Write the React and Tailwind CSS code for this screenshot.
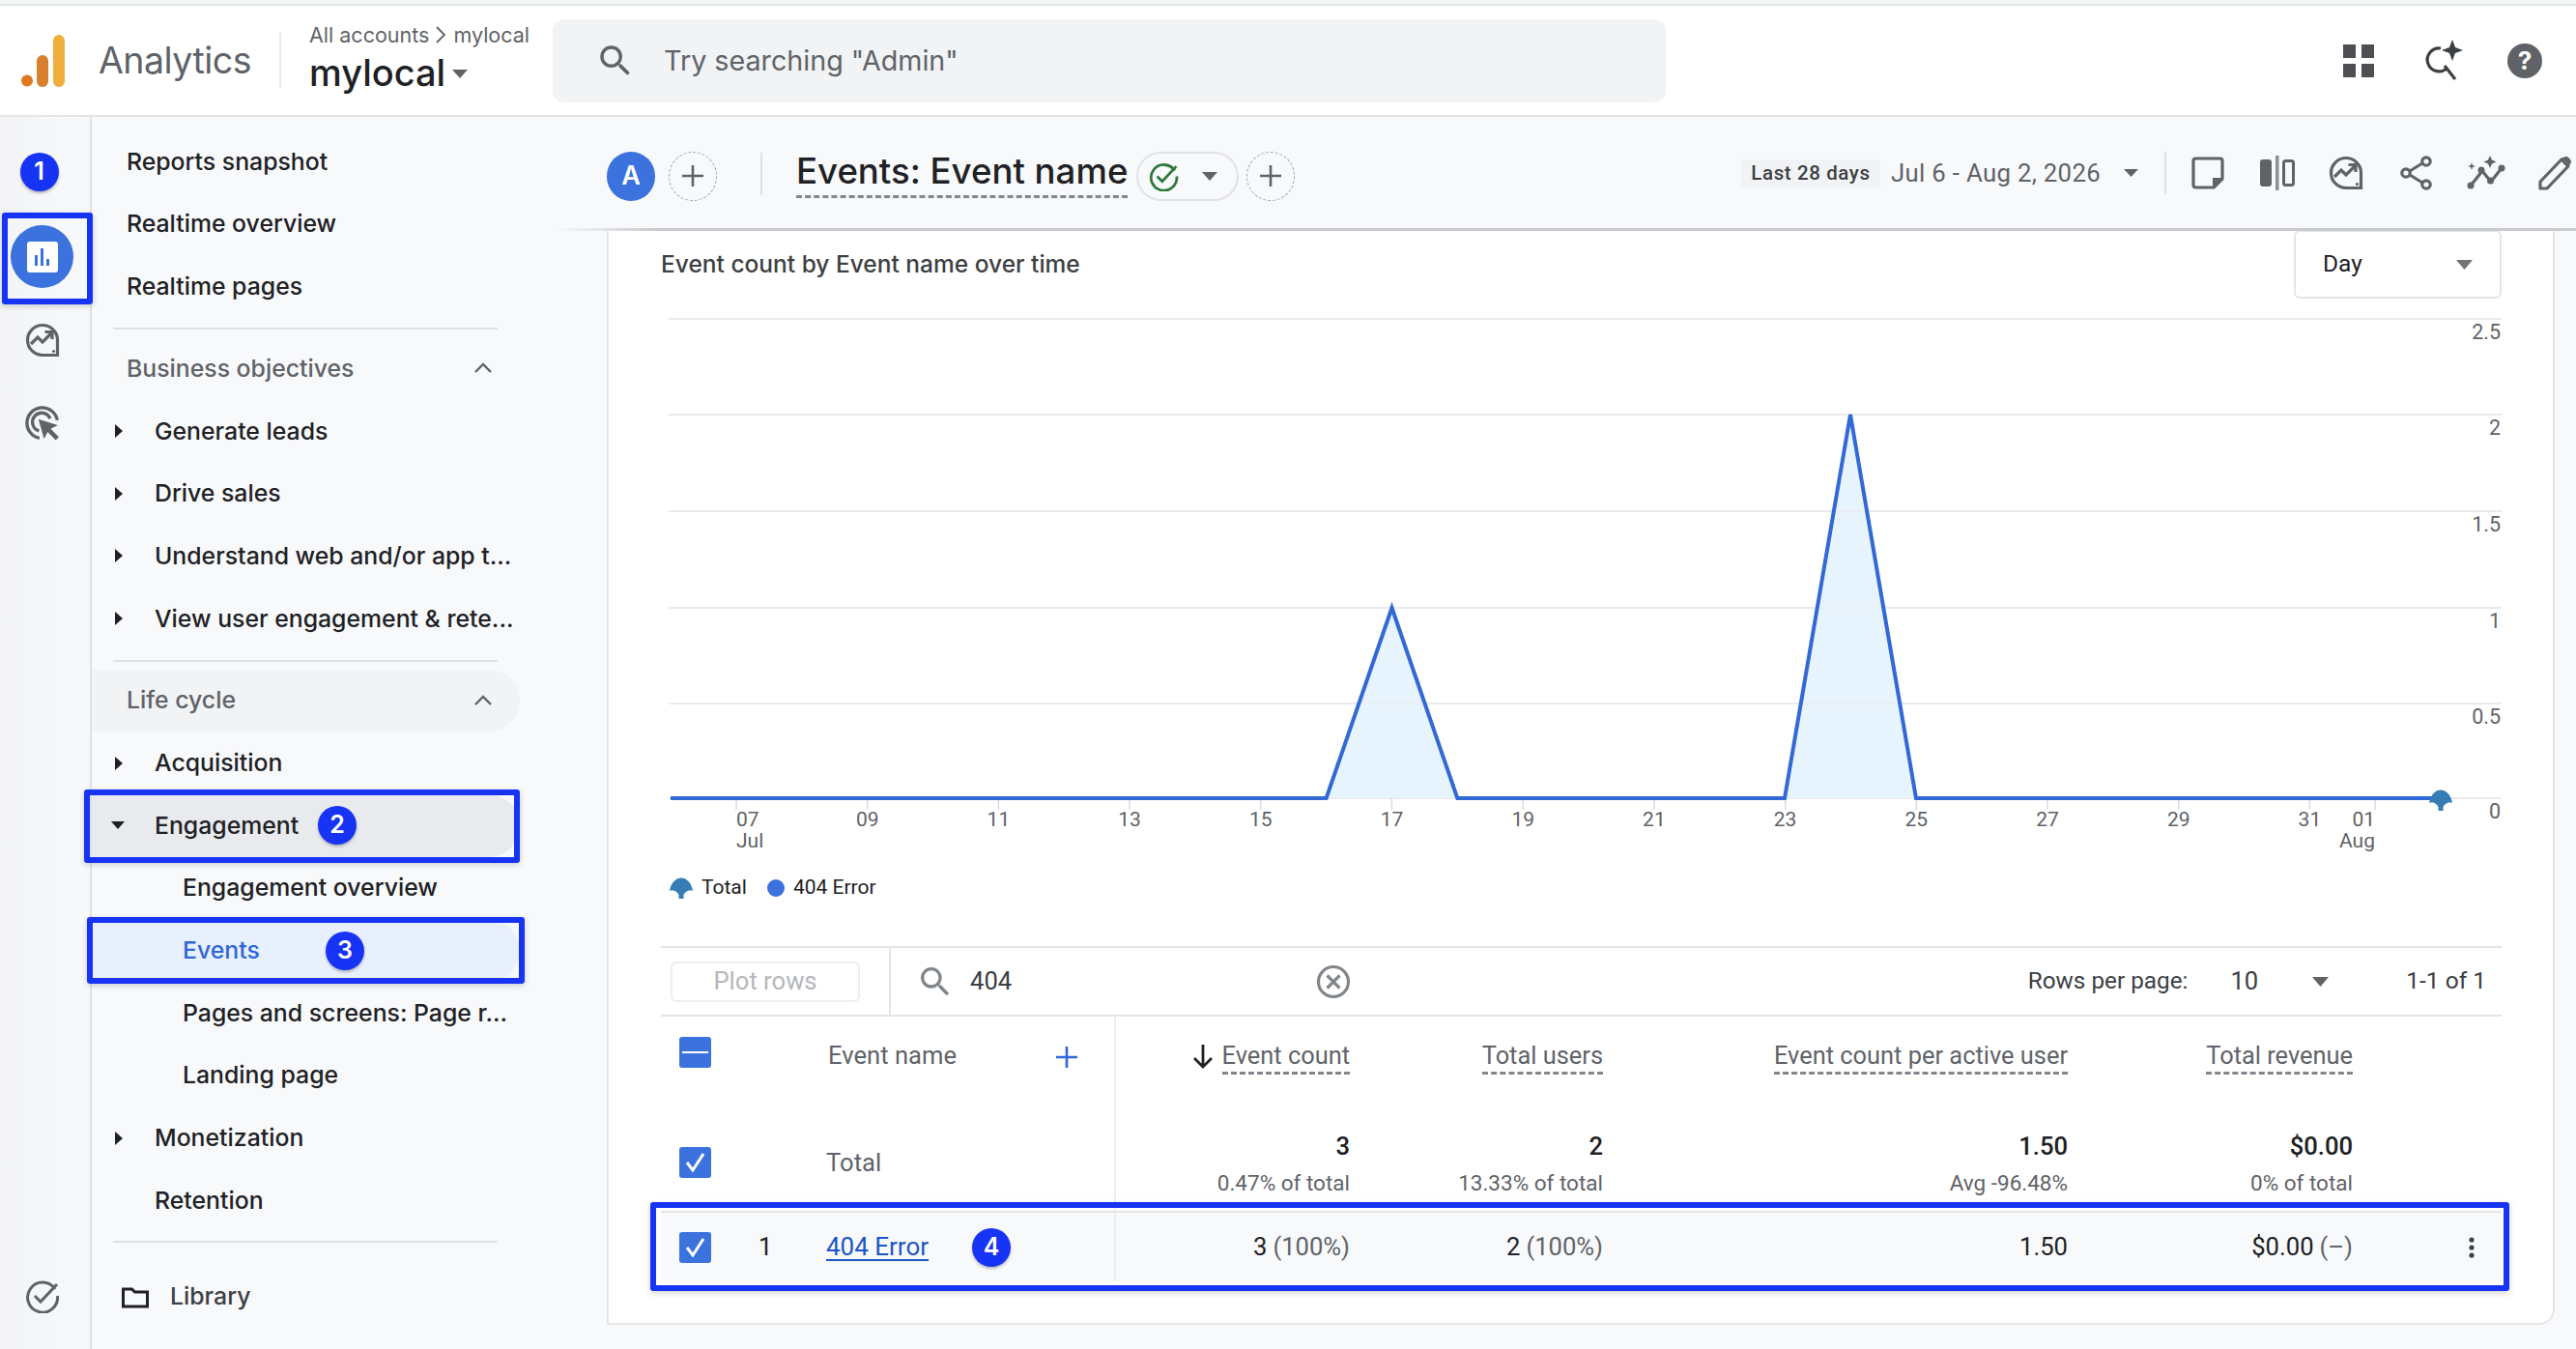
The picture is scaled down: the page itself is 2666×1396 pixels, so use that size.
import { Fragment } from 'react'

const BLUE = 'border-[6px] border-[#1733f5] rounded-[3px] shadow-[0_2px_6px_rgba(0,0,0,0.18)]'
const SANS = 'font-["Inter","Noto_Sans",sans-serif]'
const ROBOTO = 'font-["Roboto",sans-serif]'

function Badge({ n, className = '' }) {
  return (
    <span className={`flex w-10 h-10 items-center justify-center rounded-full bg-[#1733f5] text-white text-[25px] font-semibold shadow-[0_2px_3px_rgba(0,0,0,0.25)] ${SANS} ${className}`}>{n}</span>
  )
}

function Logo() {
  return (
    <svg width="45" height="54" viewBox="0 0 45 54">
      <circle cx="6" cy="47.5" r="6" fill="#dd7a1f" />
      <rect x="16" y="21" width="12" height="33" rx="6" fill="#d9802e" />
      <rect x="33" y="0" width="12" height="54" rx="6" fill="#f0ae3c" />
    </svg>
  )
}

function SearchIcon({ size = 36, color = '#5f6368' }) {
  return (
    <svg width={size} height={size} viewBox="0 0 24 24" fill={color}>
      <path d="M15.5 14h-.79l-.28-.27A6.471 6.471 0 0 0 16 9.5 6.5 6.5 0 1 0 9.5 16c1.61 0 3.09-.59 4.23-1.57l.27.28v.79l5 4.99L20.49 19l-4.99-5zm-6 0C7.01 14 5 11.99 5 9.5S7.01 5 9.5 5 14 7.01 14 9.5 11.99 14 9.5 14z" />
    </svg>
  )
}

function InsightIcon({ size = 36 }) {
  return (
    <svg width={size} height={size} viewBox="0 0 36 36" fill="none" stroke="#5f6368" strokeWidth="3.2">
      <path d="M18 2.5a15.5 15.5 0 1 0 0 31h15.5V18A15.5 15.5 0 0 0 18 2.5z" />
      <path d="M6 22l7-7 5 5 9-9" strokeLinejoin="miter" />
      <path d="M20.5 9.5H28V17" />
      <circle cx="29.5" cy="29.5" r="1.6" fill="#5f6368" stroke="none" />
    </svg>
  )
}

function TargetIcon() {
  return (
    <svg width="38" height="38" viewBox="0 0 36 36" fill="none" stroke="#5f6368" strokeWidth="3.2">
      <path d="M15 32.5A15 15 0 1 1 32.5 15" />
      <path d="M14.5 25.5A9 9 0 1 1 25.5 13.5" />
      <path d="M14 14l19 6-7 3.5 8 8-3 3-8-8-3.5 7z" fill="#5f6368" stroke="none" />
    </svg>
  )
}

function CheckCircle({ size = 36, color = '#5f6368', sw = 3 }) {
  return (
    <svg width={size} height={size} viewBox="0 0 36 36" fill="none" stroke={color} strokeWidth={sw}>
      <path d="M31 11A15.5 15.5 0 1 0 33.5 18" />
      <path d="M10 18l6 6L33 6" />
    </svg>
  )
}

function Triangle({ w = 16, h = 9, color = '#5f6368', className = '' }) {
  return (
    <svg width={w} height={h} viewBox="0 0 16 9" preserveAspectRatio="none" className={className}><path d="M0 0h16L8 9z" fill={color} /></svg>
  )
}

function Chevron() {
  return (
    <svg width="20" height="12" viewBox="0 0 20 12" fill="none" stroke="#5f6368" strokeWidth="2.4"><path d="M2 10l8-8 8 8" /></svg>
  )
}

function DashedPlus() {
  return (
    <span className="flex w-[50px] h-[51px] shrink-0 items-center justify-center rounded-full border border-dashed border-[#9aa0a6]">
      <svg width="26" height="26" viewBox="0 0 26 26" stroke="#5f6368" strokeWidth="2.6"><path d="M13 2v22M2 13h22" /></svg>
    </span>
  )
}

function NoteIcon() {
  return (
    <svg width="34" height="34" viewBox="0 0 34 34" fill="none" stroke="#5f6368" strokeWidth="3.2">
      <path d="M2 4.5A2.5 2.5 0 0 1 4.5 2h25A2.5 2.5 0 0 1 32 4.5V23l-9 9H4.500A2.5 2.500 0 0 1 2 29.500z" strokeLinejoin="round" />
      <path d="M32 22H22v10z" fill="#5f6368" stroke="none" />
    </svg>
  )
}

function CompareIcon() {
  return (
    <svg width="36" height="36" viewBox="0 0 36 36">
      <rect x="0" y="4" width="12" height="28" rx="3" fill="#5f6368" />
      <rect x="16" y="0" width="3.500" height="36" fill="#8d9096" />
      <rect x="24.500" y="5.500" width="10" height="25" rx="2" fill="none" stroke="#5f6368" strokeWidth="3" />
    </svg>
  )
}

function ShareIcon() {
  return (
    <svg width="34" height="36" viewBox="0 0 34 36" fill="none" stroke="#5f6368" strokeWidth="3.2">
      <circle cx="27" cy="6" r="4.200" />
      <circle cx="6" cy="18" r="4.200" />
      <circle cx="27" cy="30" r="4.200" />
      <path d="M10 16L23 8M10 20l13 8" />
    </svg>
  )
}

function SparkLineIcon() {
  return (
    <svg width="40" height="36" viewBox="0 0 40 36">
      <path d="M4 31l12-15 9 11L36 13" fill="none" stroke="#5f6368" strokeWidth="3.200" />
      <circle cx="4" cy="31" r="3.500" fill="#5f6368" />
      <circle cx="15" cy="15" r="3.500" fill="#5f6368" />
      <circle cx="24.500" cy="26" r="3.500" fill="#5f6368" />
      <circle cx="36" cy="13" r="3.500" fill="#5f6368" />
      <path d="M24 0l2 4.500 4.500 2-4.500 2-2 4.500-2-4.500-4.500-2 4.500-2z" fill="#5f6368" />
      <path d="M5 7l1 3 3 1-3 1-1 3-1-3-3-1 3-1z" fill="#5f6368" />
    </svg>
  )
}

function PencilIcon() {
  return (
    <svg width="34" height="36" viewBox="0 0 34 36" fill="none" stroke="#5f6368" strokeWidth="3.200">
      <path d="M2 34v-7L24 4l7 7L9 34z" strokeLinejoin="round" />
      <path d="M24 2l8 8 1-1a4 4 0 0 0-1-6 4 4 0 0 0-6-1z" fill="#5f6368" stroke="none" />
    </svg>
  )
}

function Rail() {
  return (
    <div className="w-[95px] shrink-0 border-r-2 border-[#dfe1e5] flex flex-col items-center pr-[6px] pt-[37px] pb-[37px] bg-gradient-to-r from-[#f3f4f6] to-[#f8f9fb]">
      <Badge n="1" className="mr-[6px]" />
      <div className="relative mt-[35px] w-[65px] h-[65px] rounded-full bg-[#3b72de] flex items-center justify-center">
        <span className="flex w-8 h-8 items-end justify-center gap-[3px] rounded-[3px] bg-white pb-[7px]">
          <span className="w-[3px] h-[11px] bg-[#3b72de]" />
          <span className="w-[3px] h-[18px] bg-[#3b72de]" />
          <span className="w-[3px] h-[7px] bg-[#3b72de]" />
        </span>
        <span className={`absolute -left-[9px] -right-[20px] -top-[13px] -bottom-[17px] ${BLUE}`} />
      </div>
      <div className="mt-[36px]"><InsightIcon /></div>
      <div className="mt-[49px]"><TargetIcon /></div>
      <div className="mt-auto"><CheckCircle /></div>
    </div>
  )
}

function Row({ label, indent = 36, arrow, tone = 'text-[#202124]', className = '', children }) {
  return (
    <div className={`relative flex h-[64.7px] w-[443px] items-center rounded-r-full text-[24.8px] font-medium ${tone} ${className}`} style={{ paddingLeft: indent }}>
      {arrow === 'right' && (
        <svg width="8" height="14" viewBox="0 0 8 14" className="absolute left-[24px]"><path d="M0 0l8 7-8 7z" fill="#202124" /></svg>
      )}
      {arrow === 'down' && (
        <svg width="14" height="8" viewBox="0 0 14 8" className="absolute left-[20px]"><path d="M0 0h14L7 8z" fill="#202124" /></svg>
      )}
      <span className="whitespace-nowrap">{label}</span>
      {children}
    </div>
  )
}

function Divider({ top, bottom }) {
  return <div className={`ml-[22px] w-[398px] h-[2px] bg-[#dfe1e5] ${top} ${bottom}`} />
}

function Sidebar() {
  return (
    <nav className={`w-[479px] shrink-0 pt-[14px] ${SANS}`}>
      <Row label="Reports snapshot" />
      <Row label="Realtime overview" />
      <Row label="Realtime pages" />
      <Divider top="mt-[10px]" bottom="mb-[8px]" />
      <Row label="Business objectives" tone="text-[#5f6368]">
        <span className="absolute right-[28px]"><Chevron /></span>
      </Row>
      <Row label="Generate leads" indent={65} arrow="right" />
      <Row label="Drive sales" indent={65} arrow="right" />
      <Row label="Understand web and/or app t..." indent={65} arrow="right" />
      <Row label="View user engagement & rete..." indent={65} arrow="right" />
      <Divider top="mt-[10px]" bottom="mb-[8px]" />
      <Row label="Life cycle" tone="text-[#5f6368]" className="bg-[#f1f3f4]">
        <span className="absolute right-[28px]"><Chevron /></span>
      </Row>
      <Row label="Acquisition" indent={65} arrow="right" />
      <Row label="Engagement" indent={65} arrow="down" className="bg-[#e8eaed]">
        <Badge n="2" className="absolute left-[234px]" />
        <span className={`absolute -left-2 right-0 -top-[5px] -bottom-[6px] ${BLUE}`} />
      </Row>
      <Row label="Engagement overview" indent={94} />
      <Row label="Events" indent={94} tone="text-[#2f67d8]" className="bg-[#e8f0fe]">
        <Badge n="3" className="absolute left-[242px]" />
        <span className={`absolute -left-[5px] -right-[5px] -top-[2px] -bottom-[2px] ${BLUE}`} />
      </Row>
      <Row label="Pages and screens: Page r..." indent={94} />
      <Row label="Landing page" indent={94} />
      <Row label="Monetization" indent={65} arrow="right" />
      <Row label="Retention" indent={65} />
      <Divider top="mt-[9px]" bottom="mb-[24px]" />
      <div className="flex h-[64px] items-center pl-[31px] text-[24.8px] font-medium text-[#3c4043]">
        <svg width="28" height="24" viewBox="0 0 28 24" fill="none" stroke="#202124" strokeWidth="3"><path d="M1.500 4h9l3 3h13v15h-25z" /></svg>
        <span className="ml-[22px]">Library</span>
      </div>
    </nav>
  )
}

function Toolbar() {
  return (
    <div className={`relative z-10 flex h-[116px] shrink-0 items-center bg-[#f8f9fb] pl-[54px] pr-[5px] ${SANS}`}>
      <span className="mt-[6px] flex w-[50px] h-[51px] shrink-0 items-center justify-center rounded-full bg-[#3b72de] text-[27px] font-semibold text-white">A</span>
      <span className="ml-[14px] mt-[6px]"><DashedPlus /></span>
      <span className="ml-[45px] mt-[2px] h-[44px] w-[2px] bg-[#dfe1e5]" />
      <span className="ml-[35px] border-b-[3px] border-dashed border-[#80868b] pb-[2px] text-[36.6px] leading-[46px] font-medium text-[#202124] whitespace-nowrap">Events: Event name</span>
      <span className="ml-[9px] mt-[6px] flex h-[51px] w-[106px] items-center gap-[24px] rounded-full border-2 border-[#e0e2e6] pl-[11px]">
        <CheckCircle size={31} color="#2f7738" sw={3.2} />
        <Triangle />
      </span>
      <span className="ml-[8px] mt-[6px]"><DashedPlus /></span>
      <div className={`ml-auto flex items-center ${ROBOTO}`}>
        <span className="flex h-[29px] w-[144px] items-center justify-center bg-[#f1f3f4] text-[20.5px] font-medium tracking-[0.6px] text-[#3c4043]">Last 28 days</span>
        <span className="ml-[11px] text-[25.8px] tracking-[0.3px] text-[#5f6368] whitespace-nowrap">Jul 6 - Aug 2, 2026</span>
        <Triangle w={15} h={8} className="ml-[24px]" />
        <span className="ml-[27px] h-[44px] w-[2px] bg-[#dfe1e5]" />
        <span className="ml-[26px]"><NoteIcon /></span>
        <span className="ml-[37px]"><CompareIcon /></span>
        <span className="ml-[35px]"><InsightIcon /></span>
        <span className="ml-[38px]"><ShareIcon /></span>
        <span className="ml-[35px]"><SparkLineIcon /></span>
        <span className="ml-[34px]"><PencilIcon /></span>
      </div>
      <span className="absolute inset-x-0 -bottom-[2px] h-[3px] bg-gradient-to-r from-[#f8f9fb] to-[#c9cbce] to-[5%]" />
    </div>
  )
}

// chart coordinates: page x - 684, page y - 309
const gridY = [20, 119, 219, 319, 418, 516]
const yLabels = ['2.5', '2', '1.5', '1', '0.5', '0']
const ticks = ['07', '09', '11', '13', '15', '17', '19', '21', '23', '25', '27', '29', '31']
const tickX = (i) => 78 + i * 135.7

function Ginkgo({ x, y, fill = '#367cb5' }) {
  return <path transform={`translate(${x} ${y})`} d="M-12 5C-9-13 9-13 12 5C8 3 4 6 2.500 9V13H-2.500V9C-4 6-8 3-12 5Z" fill={fill} />
}

function Chart() {
  const top = 516
  const line = `10,${top} 688.600,${top} 756.500,319 824.300,${top} 1163,${top} 1231,119 1299,${top} 1842,${top}`
  return (
    <svg width="1905" height="585" viewBox="0 0 1905 585" className="block">
      {gridY.map((y) => <line key={y} x1="8" x2="1905" y1={y} y2={y} stroke="#e8eaed" strokeWidth="2" />)}
      <polygon points={`688.600,${top} 756.500,319 824.300,${top}`} fill="#e8f4fd" />
      <polygon points={`1163,${top} 1231,119 1299,${top}`} fill="#e8f4fd" />
      {gridY.slice(1, 5).map((y) => <line key={y} x1="8" x2="1905" y1={y} y2={y} stroke="#e8eaed" strokeOpacity="0.6" strokeWidth="2" />)}
      {ticks.map((t, i) => <line key={t} x1={tickX(i)} x2={tickX(i)} y1={top} y2={top + 12} stroke="#dadce0" strokeWidth="1.500" />)}
      <line x1="1774" x2="1774" y1={top} y2={top + 12} stroke="#dadce0" strokeWidth="1.500" />
      <polyline points={line} fill="none" stroke="#3269d6" strokeWidth="4" strokeLinejoin="miter" />
      <Ginkgo x={1842} y={516} />
      <g className={ROBOTO} fontSize="21" fill="#5f6368">
        {yLabels.map((l, i) => <text key={l} x="1904" y={gridY[i] + 21} fontSize="21.5" textAnchor="end">{l}</text>)}
        {ticks.map((t, i) => <text key={t} x={i === 0 ? 78 : tickX(i)} y="545" textAnchor={i === 0 ? 'start' : 'middle'}>{t}</text>)}
        <text x="78" y="567">Jul</text>
        <text x="1774" y="545" textAnchor="end">01</text>
        <text x="1774" y="567" textAnchor="end">Aug</text>
      </g>
    </svg>
  )
}

function Legend() {
  return (
    <div className={`flex h-[46px] items-center pl-[9px] pt-[2px] text-[21px] text-[#202124] ${ROBOTO}`}>
      <svg width="24" height="24" viewBox="-12 -10 24 24"><Ginkgo x={0} y={0} /></svg>
      <span className="ml-[9px]">Total</span>
      <span className="ml-[21px] w-[18px] h-[18px] rounded-full bg-[#3b72de]" />
      <span className="ml-[9px]">404 Error</span>
    </div>
  )
}

function Checkbox({ kind = 'check' }) {
  return (
    <span className="flex w-[33px] h-[32px] shrink-0 items-center justify-center rounded-[3px] bg-[#3b72de]">
      {kind === 'check'
        ? <svg width="24" height="22" viewBox="0 0 24 22" fill="none" stroke="#fff" strokeWidth="3"><path d="M3 11l6 8L20 2" /></svg>
        : <span className="w-[27px] h-[2.500px] bg-white" />}
    </span>
  )
}

const colRight = 'flex justify-end'
const grid = 'grid grid-cols-[471px_242px_262px_481px_295px_153px]'

function HeadCell({ children, icon }) {
  return (
    <div className={`${colRight} items-start`}>
      {icon}
      <span className="border-b-[3px] border-dashed border-[#80868b] text-[25.4px] leading-[32px] pb-[1px] text-[#5f6368] whitespace-nowrap">{children}</span>
    </div>
  )
}

function TotalCell({ value, sub }) {
  return (
    <div className="flex flex-col items-end">
      <span className="leading-[32px] font-medium text-[#202124]">{value}</span>
      <span className="mt-[6px] leading-[32px] text-[22.5px] text-[#5f6368]">{sub}</span>
    </div>
  )
}

function ValueCell({ value, pct }) {
  return (
    <div className="flex justify-end text-[#202124]">
      <span>{value}</span>
      {pct && <span className="ml-[6px] text-[#5f6368]">{pct}</span>}
    </div>
  )
}

function Table() {
  return (
    <div className={`text-[25.6px] ${ROBOTO}`}>
      <div className="flex h-[73px] items-center border-y-2 border-[#e3e5e8] text-[#5f6368]">
        <div className="flex h-full w-[238px] shrink-0 items-center border-r-2 border-[#e3e5e8] pl-[10px]">
          <span className="flex h-[42px] w-[196px] items-center justify-center rounded-[6px] border-2 border-[#edeef0] text-[#b4b7bb]">Plot rows</span>
        </div>
        <span className="ml-[26px]"><SearchIcon size={40} color="#80868b" /></span>
        <span className="ml-[16px] text-[#3c4043]">404</span>
        <span className="ml-[315px]">
          <svg width="36" height="36" viewBox="0 0 36 36" fill="none" stroke="#80868b" strokeWidth="3.200"><circle cx="18" cy="18" r="15.500" /><path d="M11.500 11.500l13 13M24.500 11.500l-13 13" /></svg>
        </span>
        <span className="ml-auto whitespace-nowrap text-[24.3px] text-[#3c4043]">Rows per page:</span>
        <span className="ml-[44px] text-[#3c4043]">10</span>
        <Triangle w={17} h={10} className="ml-[56px]" />
        <span className="ml-[80px] mr-[16px] text-[24.5px] text-[#3c4043] whitespace-nowrap">1-1 of 1</span>
      </div>
      <div className={`${grid} h-[87px] pt-[24px]`}>
        <div className="-mt-[24px] flex items-start border-r-2 border-[#eceef0] pl-[19px] pt-[21px] text-[#5f6368]">
          <Checkbox kind="minus" />
          <span className="ml-[121px] mt-[3px] leading-[32px]">Event name</span>
          <svg width="22" height="22" viewBox="0 0 22 22" stroke="#2f67d8" strokeWidth="2.600" className="ml-[103px] mt-[10px]"><path d="M11 0v22M0 11h22" /></svg>
        </div>
        <HeadCell icon={<svg width="24" height="26" viewBox="0 0 24 26" fill="none" stroke="#202124" strokeWidth="2.800" className="mr-[8px] mt-[4px]"><path d="M12 1v22M3 15l9 9 9-9" /></svg>}>Event count</HeadCell>
        <HeadCell>Total users</HeadCell>
        <HeadCell>Event count per active user</HeadCell>
        <HeadCell>Total revenue</HeadCell>
      </div>
      <div className={`${grid} h-[114px]`}>
        <div className="flex items-start border-r-2 border-[#eceef0] pl-[19px] pt-[48px] text-[#5f6368]">
          <Checkbox />
          <span className="ml-[119px] leading-[32px]">Total</span>
        </div>
        <div className="pt-[31px]"><TotalCell value="3" sub="0.47% of total" /></div>
        <div className="pt-[31px]"><TotalCell value="2" sub="13.33% of total" /></div>
        <div className="pt-[31px]"><TotalCell value="1.50" sub="Avg -96.48%" /></div>
        <div className="pt-[31px]"><TotalCell value="$0.00" sub="0% of total" /></div>
      </div>
      <div className={`relative ${grid} h-[73px] items-center border-t-2 border-[#e3e5e8] bg-[#f8f9fb]`}>
        <div className="flex h-full items-center border-r-2 border-[#eceef0] pl-[19px]">
          <Checkbox />
          <span className="ml-[49px] w-[22px] text-[#202124]">1</span>
          <a className="ml-[48px] text-[26px] text-[#1a56c4] underline underline-offset-[4px]">404 Error</a>
          <Badge n="4" className="ml-[45px]" />
        </div>
        <ValueCell value="3" pct="(100%)" />
        <ValueCell value="2" pct="(100%)" />
        <ValueCell value="1.50" />
        <ValueCell value="$0.00" pct="(–)" />
        <div className="flex justify-end pr-[27px]">
          <svg width="6" height="22" viewBox="0 0 6 22" fill="#3c4043"><circle cx="3" cy="3" r="2.600" /><circle cx="3" cy="11" r="2.600" /><circle cx="3" cy="19" r="2.600" /></svg>
        </div>
        <span className={`absolute -left-[11px] -right-[8px] -top-[11px] -bottom-[10px] ${BLUE}`} />
      </div>
    </div>
  )
}

export default function App() {
  return (
    <div className={`flex h-[1396px] w-[2666px] flex-col overflow-hidden bg-[#f8f9fb] ${SANS}`}>
      <div className="h-1 shrink-0 bg-[#f3f7f7]" />
      <header className="flex h-[117px] shrink-0 items-center border-t-2 border-b-2 border-t-[#e1e4e6] border-b-[#e3e5e8] bg-white">
        <span className="ml-[22px]"><Logo /></span>
        <span className="ml-[35px] mt-[2px] w-[187px] text-[37.5px] tracking-[-0.5px] text-[#5f6368]">Analytics</span>
        <span className="h-[58px] w-[2px] bg-[#e8eaed]" />
        <div className="ml-[29px] -mt-[5px] w-[252px]">
          <div className="flex items-center text-[21.5px] leading-[26px] text-[#5f6368]">
            All accounts
            <svg width="11" height="18" viewBox="0 0 11 18" fill="none" stroke="#5f6368" strokeWidth="1.800" className="mx-[7px]"><path d="M1 1l8 8-8 8" /></svg>
            mylocal
          </div>
          <div className="mt-[3px] flex items-center text-[38px] leading-[46px] font-medium text-[#202124]">
            mylocal
            <Triangle w={16} h={9} className="ml-[7px] mt-[3px]" />
          </div>
        </div>
        <div className="flex h-[86px] w-[1152px] items-center rounded-[12px] bg-[#f1f3f4] pl-[44px] text-[28.7px] text-[#5f6368]">
          <SearchIcon size={42} />
          <span className="ml-[29px]">Try searching "Admin"</span>
        </div>
        <div className="ml-auto flex items-center pr-[35px]">
          <svg width="36" height="36" viewBox="0 0 36 36" fill="#4d4f53"><rect x="2" y="1" width="13" height="14" /><rect x="21" y="1" width="13" height="14" /><rect x="2" y="21" width="13" height="14" /><rect x="21" y="21" width="13" height="14" /></svg>
          <svg width="44" height="44" viewBox="0 0 44 44" fill="none" stroke="#3c4043" strokeWidth="3.200" className="ml-[47px]">
            <path d="M20 9a12 12 0 1 0 7 20" />
            <path d="M24 27l11 14" />
            <path d="M32 0l3 8 8 3-8 3-3 8-3-8-8-3 8-3z" fill="#3c4043" stroke="none" />
          </svg>
          <span className="ml-[45px] flex h-9 w-9 items-center justify-center rounded-full bg-[#5f6368] text-[26px] font-bold leading-none text-white">?</span>
        </div>
      </header>
      <div className="flex min-h-0 flex-1">
        <Rail />
        <Sidebar />
        <main className="flex min-w-0 flex-1 flex-col">
          <Toolbar />
          <div className="px-[22px] pl-[54px]">
            <div className="h-[1134px] rounded-br-[16px] border-x-2 border-b-2 border-[#e3e5e8] bg-white pl-[54px] pr-[53px]">
              <div className="flex h-[73px] items-start justify-between">
                <h2 className="mt-[20px] text-[24.5px] font-medium leading-[32px] text-[#3c4043]">Event count by Event name over time</h2>
                <div className={`mt-[1px] flex h-[71px] w-[215px] items-center rounded-b-[6px] rounded-t-[6px] border-2 border-[#e3e5e8] pl-[28px] text-[24.5px] text-[#202124] ${ROBOTO}`}>
                  Day
                  <Triangle w={17} h={10} color="#70757a" className="ml-auto mr-[28px]" />
                </div>
              </div>
              <Chart />
              <Legend />
              <div className="mt-[38px]">
                <Table />
              </div>
            </div>
          </div>
        </main>
      </div>
    </div>
  )
}
